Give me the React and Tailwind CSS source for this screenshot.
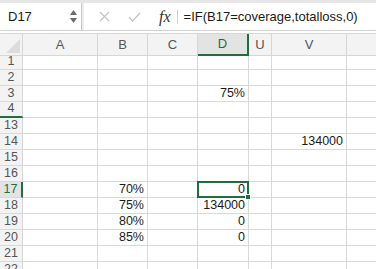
import React from 'react';

const cols = [
  { key: 'A', w: 'w-[75px]' },
  { key: 'B', w: 'w-[50px]' },
  { key: 'C', w: 'w-[50px]' },
  { key: 'D', w: 'w-[51px]' },
  { key: 'U', w: 'w-[23px]' },
  { key: 'V', w: 'w-[75px]' },
  { key: 'W', w: 'w-[40px]' },
];

const rows = [
  { n: '1', h: 'h-[14px]', cells: {} },
  { n: '2', h: 'h-[16px]', cells: {} },
  { n: '3', h: 'h-[16px]', cells: { D: '75%' } },
  { n: '4', h: 'h-[16px]', cells: {}, freeze: true },
  { n: '13', h: 'h-[16px]', cells: {} },
  { n: '14', h: 'h-[16px]', cells: { V: '134000' } },
  { n: '15', h: 'h-[16px]', cells: {} },
  { n: '16', h: 'h-[16px]', cells: {} },
  { n: '17', h: 'h-[16px]', cells: { B: '70%', D: '0' }, active: true },
  { n: '18', h: 'h-[16px]', cells: { B: '75%', D: '134000' } },
  { n: '19', h: 'h-[16px]', cells: { B: '80%', D: '0' } },
  { n: '20', h: 'h-[16px]', cells: { B: '85%', D: '0' } },
  { n: '21', h: 'h-[16px]', cells: {} },
  { n: '22', h: 'h-[16px]', cells: {} },
];

const font = { fontFamily: '"Liberation Sans", Arial, sans-serif' };

export default function App() {
  return (
    <div className="w-[376px] h-[269px] overflow-hidden bg-white text-[#1a1a1a]" style={font}>
      <div className="h-[3px] bg-[#e6e6e6]" />
      <div className="h-[28px] flex items-stretch border-b border-[#d0d0d0]">
        <div className="w-[82px] flex items-center justify-between pl-[8px] pr-[4px] border-r border-[#c8c8c8]">
          <span className="text-[13px]">D17</span>
          <div className="flex flex-col items-center gap-[3px] text-[#6b6b6b]">
            <svg width="7" height="5" viewBox="0 0 7 5"><path d="M3.5 0 L7 5 L0 5 Z" fill="currentColor" /></svg>
            <svg width="7" height="5" viewBox="0 0 7 5"><path d="M0 0 L7 0 L3.5 5 Z" fill="currentColor" /></svg>
          </div>
        </div>
        <div className="w-[2px] bg-[#ececec]" />
        <div className="flex items-center flex-1 min-w-0">
          <svg className="ml-[15px]" width="11" height="11" viewBox="0 0 11 11">
            <path d="M1 1 L10 10 M10 1 L1 10" stroke="#c4c4c4" strokeWidth="1.3" fill="none" />
          </svg>
          <svg className="ml-[18px]" width="13" height="10" viewBox="0 0 13 10">
            <path d="M1 5 L4.5 9 L12 1" stroke="#c4c4c4" strokeWidth="1.3" fill="none" />
          </svg>
          <span className="ml-[18px] text-[16px] italic text-[#333]" style={{ fontFamily: '"Liberation Serif", serif' }}>fx</span>
          <div className="ml-[6px] w-px h-[14px] bg-[#d0d0d0]" />
          <span className="ml-[6px] text-[13px] whitespace-nowrap">=IF(B17=coverage,totalloss,0)</span>
        </div>
      </div>
      <div className="h-[2px] bg-white" />
      <div className="flex flex-col">
        <div className="flex h-[23px] border-t border-[#d6d6d6] border-b border-[#c9c9c9] bg-[#f3f3f3]">
          <div className="w-[23px] shrink-0 border-r border-[#d6d6d6] relative">
            <svg className="absolute right-[2px] bottom-[2px]" width="14" height="14" viewBox="0 0 14 14">
              <path d="M14 0 L14 14 L0 14 Z" fill="#dcdcdc" />
            </svg>
          </div>
          {cols.map((c) => (
            <div
              key={c.key}
              className={`${c.w} shrink-0 flex items-center justify-center text-[13px] ${
                c.key === 'D'
                  ? 'text-[#1f6e3d] bg-[#e3e3e3] border-r-2 border-r-[#1f6e3d] border-b-2 border-b-[#1f6e3d] -mb-px'
                  : 'text-[#555] border-r border-[#d6d6d6]'
              }`}
            >
              {c.key === 'W' ? '' : c.key}
            </div>
          ))}
        </div>
        {rows.map((r) => (
          <div key={r.n} className={`flex ${r.h}`}>
            <div
              className={`w-[23px] shrink-0 flex items-end justify-center text-[12.5px] leading-[15px] ${
                r.active ? 'bg-[#e3e3e3] text-[#1f6e3d] border-r-2 border-r-[#1f6e3d]' : 'bg-[#f3f3f3] text-[#555] border-r border-[#d6d6d6]'
              } ${r.freeze ? 'border-b-2 border-b-[#1f6e3d]' : 'border-b border-b-[#d9d9d9]'}`}
            >
              {r.n}
            </div>
            {cols.map((c) => {
              const val = r.cells[c.key];
              const selected = r.active && c.key === 'D';
              return (
                <div
                  key={c.key}
                  className={`${c.w} shrink-0 border-r border-b border-[#d9d9d9] flex items-end justify-end pr-[3px] text-[12.5px] leading-[15px] relative ${
                    selected ? 'z-10' : ''
                  }`}
                >
                  {selected && (
                    <>
                      <div className="absolute -left-px -top-px -right-px -bottom-px border-2 border-[#1f6e3d]" />
                      <div className="absolute -right-[3px] -bottom-[3px] w-[6px] h-[6px] bg-[#1f6e3d] border border-white" />
                    </>
                  )}
                  <span className="relative">{val}</span>
                </div>
              );
            })}
          </div>
        ))}
      </div>
    </div>
  );
}
